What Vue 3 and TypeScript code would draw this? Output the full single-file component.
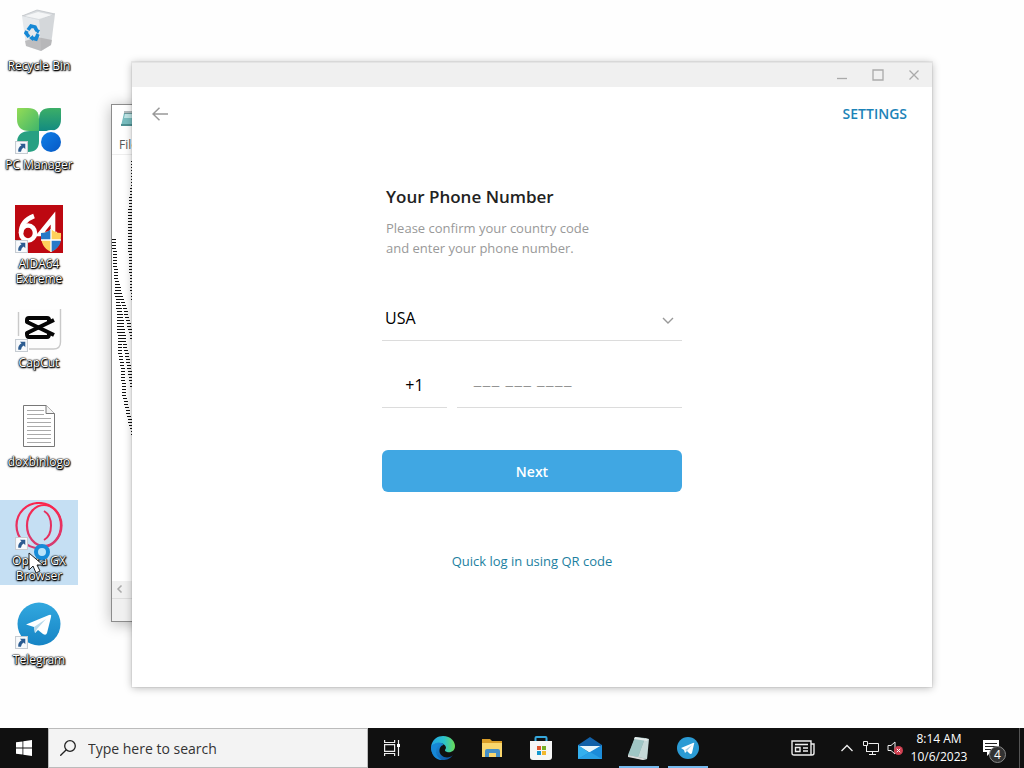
<script setup lang="ts">
import { ref } from 'vue'

type Point = [number, number]

const country = ref('USA')
const code = ref('+1')
const phone = ref('')
const query = ref('')

const shortcuts = [
  { id: 'recycle', label: 'Recycle Bin', linked: false },
  { id: 'pcm', label: 'PC Manager', linked: true },
  { id: 'aida', label: 'AIDA64 Extreme', linked: true },
  { id: 'capcut', label: 'CapCut', linked: true },
  { id: 'doc', label: 'doxbinlogo', linked: false },
  { id: 'opera', label: 'Opera GX Browser', linked: true },
  { id: 'telegram', label: 'Telegram', linked: true },
]

const pinned = [
  { id: 'edge', label: 'Microsoft Edge', open: false },
  { id: 'files', label: 'File Explorer', open: false },
  { id: 'store', label: 'Microsoft Store', open: false },
  { id: 'mail', label: 'Mail', open: false },
  { id: 'notepad', label: 'Notepad', open: true },
  { id: 'tg', label: 'Telegram', open: true },
]

// Strands of the text art in the notepad document, as x/y knots
const strands: Point[][] = [
  [[16, 1], [17, 3]],
  [[19, 6], [19, 26], [17, 46], [16, 60], [16, 84], [17, 110], [19, 146]],
  [[0, 82], [1, 108], [3, 130], [5, 162], [6, 196], [9, 216], [10, 238], [14, 256], [17, 270], [20, 282]],
  [[2, 122], [6, 138], [10, 150], [15, 170], [19, 186]],
  [[2, 136], [7, 160], [10, 184], [14, 206], [19, 234]],
]

function hatch(points: Point[]): string {
  let d = ''
  for (let i = 0; i < points.length - 1; i++) {
    const [x0, y0] = points[i]
    const [x1, y1] = points[i + 1]
    for (let y = Math.ceil(y0 / 3) * 3; y < y1; y += 3) {
      const x = Math.round(x0 + ((x1 - x0) * (y - y0)) / (y1 - y0))
      d += `M${x} ${y}h4v1h-4z`
    }
  }
  return d
}

const art = strands.map(hatch).join('')
</script>

<template>
  <div class="screen">
    <main class="desktop">
      <nav class="shortcuts" aria-label="Desktop">
        <button v-for="s in shortcuts" :key="s.id" type="button" class="shortcut" :class="{ selected: s.id === 'opera' }">
          <span class="picture">
            <svg v-if="s.id === 'recycle'" viewBox="0 0 48 48">
              <path d="M7 9 22 3l18 4-16 7z" fill="#d9dcdf" stroke="#b9bdc1" stroke-width=".7" />
              <path d="M10 9 23 5l14 3-13 4z" fill="#f4f5f6" />
              <path d="m7 9 17 4 2 31-15-5z" fill="#e6e9ec" />
              <path d="m24 13 16-6-4 31-10 6z" fill="#d4d7da" />
              <path d="m10 34 12-4 15 3-1 5-10 6-15-5z" fill="#a7a6a7" opacity=".65" />
              <g fill="none" stroke="#1688d5" stroke-width="3.6">
                <path d="m13 23 3-4 4 1 2 4" /><path d="m23 27-2 5-4-1" /><path d="m14 30-3-4 1-2" />
              </g>
              <path d="m19 22 6 1-2 4zM18 28v6l-4-3z" fill="#1688d5" />
            </svg>
            <svg v-else-if="s.id === 'pcm'" viewBox="0 0 48 48">
              <defs>
                <linearGradient id="leafA" x2="1" y2="1"><stop stop-color="#94dc55" /><stop offset="1" stop-color="#3fb56c" /></linearGradient>
                <linearGradient id="leafB" x2="0" y2="1"><stop stop-color="#3cae67" /><stop offset="1" stop-color="#128b81" /></linearGradient>
                <linearGradient id="ball" x2="1" y2="1"><stop stop-color="#0f80e8" /><stop offset="1" stop-color="#0658c5" /></linearGradient>
              </defs>
              <path d="M24 25h-9Q2 25 2 37v9h11q11 0 11-11z" fill="#27a082" />
              <path d="M3 2h10q11 0 11 11v12H14Q2 25 2 13V3q0-1 1-1z" fill="url(#leafA)" />
              <path d="M45 2H35q-11 0-11 11v12h10q12 0 12-12V3q0-1-1-1z" fill="url(#leafB)" />
              <circle cx="36" cy="36" r="12" fill="#fefefe" />
              <circle cx="36" cy="36" r="10" fill="url(#ball)" />
            </svg>
            <svg v-else-if="s.id === 'aida'" viewBox="0 0 48 48">
              <path d="M0 0h48v48H0z" fill="#bd0811" />
              <g fill="none" stroke="#fff" stroke-width="4.6">
                <path d="M19 11C11 14 6 20 6 28" /><ellipse cx="13" cy="28" rx="7" ry="7.500" />
                <path d="M38 37V13L25 29h17" />
              </g>
              <path d="M26 28q6 0 10-4 4 4 10 4 1 14-10 19-11-5-10-19z" fill="#ffd05a" />
              <path d="M36 24q-4 4-10 4v7h10zM36 35h10q-1 8-10 12z" fill="#2779c8" />
              <path d="M36 24v23M26 35h20" stroke="#fff" stroke-width="1.300" />
            </svg>
            <svg v-else-if="s.id === 'capcut'" viewBox="0 0 48 48">
              <path d="M5 5h37q4 0 4 4v30q0 6-6 6H7q-4 0-4-4V9q0-4 2-4z" fill="#fdfdfd" />
              <path d="M45.500 5v33q0 7-7 7H14M3.500 8v24" fill="none" stroke="#c9c9c9" stroke-width="1.400" />
              <g fill="none" stroke="#050505" stroke-width="4" stroke-linejoin="round">
                <path d="M34 17v-1q0-2-2-2H14q-2 0-2 2v2l27 13" /><path d="M34 29v1q0 3-2 3H14q-2 0-2-3v-1l27-13" />
              </g>
            </svg>
            <svg v-else-if="s.id === 'doc'" viewBox="0 0 48 48">
              <path d="M8.500 2.500H31l8.500 8v33h-31z" fill="#fff" stroke="#777" />
              <path d="M31 2.500v8h8.500" fill="#f4f4f4" stroke="#777" />
              <path d="M12 7.500h17M12 11.500h17M12 15.500h24M12 19.500h24M12 23.500h24M12 27.500h24M12 31.500h24M12 35.500h24M12 39.500h24" stroke="#aaa" />
            </svg>
            <svg v-else-if="s.id === 'opera'" viewBox="0 0 48 48" fill="none">
              <defs><linearGradient id="gx" x2="0" y2="1"><stop stop-color="#fa264e" /><stop offset="1" stop-color="#d43d72" /></linearGradient></defs>
              <circle cx="24" cy="23.500" r="22.500" stroke="url(#gx)" stroke-width="2.200" />
              <ellipse cx="29" cy="23.500" rx="17" ry="20.500" stroke="url(#gx)" stroke-width="2.200" />
              <path d="M29 9q7 4 7 14.500T29 38" stroke="#e52e5e" stroke-width="2" />
            </svg>
            <svg v-else viewBox="0 0 48 48">
              <defs><linearGradient id="plane" x2="0" y2="1"><stop stop-color="#32a8df" /><stop offset="1" stop-color="#1684c5" /></linearGradient></defs>
              <circle cx="24" cy="23" r="21.500" fill="url(#plane)" />
              <path d="M11 23.500 34 14q3-1 2 2l-4 16q-1 3-4 1l-5-4-3 3-1-6z" fill="#fff" />
              <path d="m19 26 12-8-9 10-2 4z" fill="#b9d9ea" />
            </svg>
            <svg v-if="s.linked" class="link-mark" viewBox="0 0 12 12">
              <path d="M.5.5h11v11H.5z" fill="#f8fafc" stroke="#c6ccd2" />
              <path d="M4.500 2.500h5v5L8 6Q6 7 5.500 10H3q-.500-4 3-6z" fill="#2c5c91" />
            </svg>
          </span>
          <span class="caption">{{ s.label }}</span>
          <svg v-if="s.id === 'opera'" class="pointer" viewBox="0 0 26 32">
            <circle cx="14" cy="8" r="6" fill="#b8e3fa" stroke="#168bd8" stroke-width="4" />
            <path d="M1 9v17l4-4 3 7 4-2-3-6h6z" fill="#fff" stroke="#222" />
          </svg>
        </button>
      </nav>

      <section class="notepad" aria-label="Notepad">
        <header class="note-head">
          <svg viewBox="0 0 18 18" class="note-icon">
            <path d="M4 3h13v13H1z" fill="#78bdbf" /><path d="M5 4h12v4H4z" fill="#bfe5e6" /><path d="M1 14h16v2H1z" fill="#4f9193" />
            <path d="M5 1v3M7 1v3M9 1v3M11 1v3M13 1v3M15 1v3" stroke="#64777a" />
          </svg>
        </header>
        <div class="note-menu">File</div>
        <div class="note-body">
          <svg class="art" viewBox="0 0 24 300"><path :d="art" fill="#111" /></svg>
        </div>
        <div class="note-scroll">
          <svg viewBox="0 0 8 8"><path d="M5.500.500 2 4l3.500 3.500" fill="none" stroke="#aaa" stroke-width="1.500" /></svg>
        </div>
        <footer class="note-status"></footer>
      </section>

      <section class="window" aria-label="Telegram">
        <header class="titlebar">
          <button type="button" aria-label="Minimize"><svg viewBox="0 0 12 12"><path d="M1 9.500h10" /></svg></button>
          <button type="button" aria-label="Maximize"><svg viewBox="0 0 12 12"><path d="M1 1h10v10H1z" /></svg></button>
          <button type="button" aria-label="Close"><svg viewBox="0 0 12 12"><path d="m1.500 1.500 9 9m0-9-9 9" /></svg></button>
        </header>
        <div class="toolbar">
          <button type="button" class="back" aria-label="Back">
            <svg viewBox="0 0 16 14"><path d="M7.500.700 1 7l6.500 6.300M1 7h15" /></svg>
          </button>
          <button type="button" class="settings">SETTINGS</button>
        </div>
        <form class="login" @submit.prevent>
          <h1>Your Phone Number</h1>
          <p>Please confirm your country code<br />and enter your phone number.</p>
          <div class="country">
            <select v-model="country" aria-label="Country"><option>USA</option></select>
            <svg viewBox="0 0 12 8"><path d="m1 1 5 5 5-5" /></svg>
          </div>
          <div class="number">
            <input v-model="code" class="code" type="text" aria-label="Country code" />
            <input v-model="phone" class="phone" type="tel" aria-label="Phone number" placeholder="––– ––– ––––" />
          </div>
          <button type="submit" class="next">Next</button>
          <a href="#" class="qr">Quick log in using QR code</a>
        </form>
      </section>
    </main>

    <footer class="taskbar">
      <button type="button" class="start" aria-label="Start">
        <svg viewBox="0 0 16 16" fill="#fff"><path d="M0 2.300 6.500 1.400v6.200H0zM7.300 1.300 16 0v7.600H7.300zM0 8.400h6.500v6.200L0 13.700zM7.300 8.400H16V16l-8.700-1.300z" /></svg>
      </button>
      <label class="search">
        <svg viewBox="0 0 16 16" fill="none" stroke="#222" stroke-width="1.300"><circle cx="10" cy="6" r="5.300" /><path d="m6.300 9.700-6 6" /></svg>
        <input v-model="query" type="text" aria-label="Search" placeholder="Type here to search" />
      </label>
      <button type="button" class="task-view" aria-label="Task view">
        <svg viewBox="0 0 16 16" fill="none" stroke="#eee" stroke-width="1.200"><path d="M.600 0v2.500h10V0M.600 16v-2.500h10V16M.600 4.600h10v6.800H.600zM14.500 0v16" /><path d="M13 4h3v3h-3z" fill="#fff" stroke="none" /></svg>
      </button>
      <button v-for="p in pinned" :key="p.id" type="button" class="app" :class="{ open: p.open }" :aria-label="p.label">
        <svg v-if="p.id === 'edge'" viewBox="0 0 26 26">
          <defs>
            <linearGradient id="e1" x2="1"><stop stop-color="#22a5e5" /><stop offset=".55" stop-color="#2bc2cb" /><stop offset="1" stop-color="#6add55" /></linearGradient>
            <linearGradient id="e2" x2="1" y2="1"><stop stop-color="#1c96e0" /><stop offset="1" stop-color="#0c4e9e" /></linearGradient>
          </defs>
          <path d="M1 12C2 4 8 1 13 1c8 0 12 6 12 10 0 5-4 7-8 6-3-1-2-2-1-4 0-5-9-8-15-1z" fill="url(#e1)" />
          <path d="M1 12c3-5 10-6 13-2-5 0-7 9 0 12 4 1 7 0 9-2-3 4-6 5-10 5C6 25 1 19 1 12z" fill="url(#e2)" />
          <path d="M9 10c-4 3-5 11 3 15-7 0-11-6-11-13 2-3 5-4 8-2z" fill="#1688d7" />
        </svg>
        <svg v-else-if="p.id === 'files'" viewBox="0 0 26 26">
          <path d="M3 4h8l2 2h10v5H3z" fill="#d99d28" /><path d="M3 8h20v14H3z" fill="#f9d66d" />
          <path d="M6 22v-6q0-2 2-2h11q2 0 2 2v6h-4v-4h-7v4z" fill="#458fc6" />
        </svg>
        <svg v-else-if="p.id === 'store'" viewBox="0 0 26 26">
          <path d="M7.500 6V3q0-1 1-1h9q1 0 1 1v3" fill="none" stroke="#36a8dc" stroke-width="2" />
          <path d="M2 6h22v16q0 3-3 3H5q-3 0-3-3z" fill="#f6f6f6" />
          <path d="M9 11h4v4H9z" fill="#df562e" /><path d="M14 11h4v4h-4z" fill="#76af24" /><path d="M9 16h4v4H9z" fill="#1698cf" /><path d="M14 16h4v4h-4z" fill="#f2b82e" />
        </svg>
        <svg v-else-if="p.id === 'mail'" viewBox="0 0 26 26">
          <path d="M1 10 13 2l12 8v5H1z" fill="#1261a9" /><path d="M2 11h22L13 18z" fill="#e9f6fd" /><path d="m1 10 12 8v6H1z" fill="#34b0ee" /><path d="m25 10-12 7L1 24h24z" fill="#1c8cd9" /><path d="m13 17 12 7H1z" fill="#2aa1e5" />
        </svg>
        <svg v-else-if="p.id === 'notepad'" viewBox="0 0 26 26">
          <path d="m9 3 13 1-1 20-4 1-15-4z" fill="#6f9594" /><path d="m9 2 10 1-7 19-10-2z" fill="#9fc6c5" /><path d="m19 3 4 1-2 20-9-2z" fill="#c6d9d8" /><path d="m9 2 13 2-1 2-13-2z" fill="#e4ebea" /><path d="m2 20 10 2 9 2-4 1-15-3z" fill="#dadada" />
        </svg>
        <svg v-else viewBox="0 0 26 26">
          <circle cx="13" cy="13" r="11" fill="#2b9bd4" /><path d="m6 13 12-5q2-1 1 1l-2 9q-1 2-3 0l-2-2-2 2-1-3z" fill="#fff" /><path d="m10 15 7-5-5 6z" fill="#a9d2e8" />
        </svg>
      </button>
      <div class="tray">
        <button type="button" class="news" aria-label="News">
          <svg viewBox="0 0 24 16" fill="none" stroke="#eee" stroke-width="1.400"><path d="M1 1h19v14H3q-2 0-2-2zM20 4h3v9q0 2-2 2h-3M4 4.500h13M12 8h5M12 11h5" /><path d="M4.500 7.500H9v4H4.500z" /></svg>
        </button>
        <button type="button" class="more" aria-label="Hidden icons"><svg viewBox="0 0 12 8" fill="none" stroke="#eee" stroke-width="1.300"><path d="m.500 7 5.500-5.500L11.500 7" /></svg></button>
        <button type="button" class="network" aria-label="Network"><svg viewBox="0 0 16 14" fill="none" stroke="#eee"><path d="M5.500 2.500h10v8H3.500v-5M9.500 10.500v3M6 13.500h7M.500.500h4v4h-4zM3.500 5v6" /></svg></button>
        <button type="button" class="sound" aria-label="Muted"><svg viewBox="0 0 16 14"><path d="M1 4.500h3L8 1v12L4 9.500H1z" fill="none" stroke="#eee" /><circle cx="11.500" cy="9.500" r="4.500" fill="#cf3f50" /><path d="m9.800 7.800 3.400 3.400m0-3.400-3.400 3.400" stroke="#fff" /></svg></button>
        <time class="clock"><span>8:14 AM</span><span>10/6/2023</span></time>
        <button type="button" class="notices" aria-label="Notifications">
          <svg viewBox="0 0 18 16"><path d="M1 0h16v12H9l-4 4v-4H1z" fill="#fff" /><path d="M3 3.500h12M3 6.500h12M3 9.500h8" stroke="#222" /></svg>
          <span class="count">4</span>
        </button>
        <span class="peek"></span>
      </div>
    </footer>
  </div>
</template>

<style>
body { margin: 0; overflow: hidden; }
</style>

<style scoped>
.screen { height: 100vh; display: flex; flex-direction: column; background: #fefefe; font-family: "Open Sans", "Noto Sans", sans-serif; color: #000; }
.screen *, .screen *::before { box-sizing: border-box; }
svg { display: block; flex: none; }
button { border: 0; padding: 0; background: none; font: inherit; color: inherit; }
input, select { border: 0; padding: 0; background: none; font: inherit; color: inherit; outline: 0; min-width: 0; border-radius: 0; }

.desktop { flex: 1; position: relative; min-height: 0; }
.shortcuts { display: grid; grid-auto-rows: 99px; width: 78px; padding-top: 5px; }
.shortcut { position: relative; display: flex; flex-direction: column; align-items: center; height: 85px; padding-top: 2px; }
.selected { background: #c5dff3; }
.picture { position: relative; width: 48px; height: 48px; margin-bottom: 3px; }
.link-mark { position: absolute; left: 0; bottom: 0; width: 13px; height: 13px; }
.caption { max-width: 72px; font-size: 12px; line-height: 15px; color: #fff; text-align: center; text-shadow: 0 0 1px #000, 0 0 1px #000, 0 0 2px #000, 1px 1px 1px #000, 0 1px 2px #000; }
.pointer { position: absolute; left: 28px; top: 44px; width: 26px; height: 32px; }

.notepad { position: absolute; left: 111px; top: 104px; width: 120px; height: 518px; display: flex; flex-direction: column; border: 1px solid #8c8c8c; background: #fff; box-shadow: 0 2px 14px rgba(0, 0, 0, .28); }
.note-head { height: 30px; padding: 5px 8px; }
.note-icon { width: 18px; height: 18px; }
.note-menu { height: 20px; padding-left: 7px; border-bottom: 1px solid #eee; font-size: 12px; line-height: 19px; color: #555; }
.note-body { flex: 1; }
.art { width: 24px; height: 300px; }
.note-scroll { height: 17px; padding: 4px; background: #f0f0f0; }
.note-scroll svg { width: 8px; height: 8px; }
.note-status { height: 23px; border-top: 1px solid #ddd; background: #f0f0f0; }

.window { position: absolute; left: 132px; right: 92px; top: 62px; min-height: 625px; background: #fff; box-shadow: 0 0 0 1px rgba(0, 0, 0, .05), 0 1px 8px rgba(0, 0, 0, .28); }
.titlebar { display: flex; justify-content: flex-end; height: 25px; background: #f0f0f0; border-top: 1px solid #e4e4e4; }
.titlebar button { width: 36px; display: grid; place-items: center; }
.titlebar svg { width: 12px; height: 12px; fill: none; stroke: #aaa; stroke-width: 1.3; }
.toolbar { display: flex; justify-content: space-between; align-items: center; height: 54px; padding: 0 25px 0 20px; }
.back svg { width: 16px; height: 14px; fill: none; stroke: #999; stroke-width: 1.5; }
.settings { font-size: 14px; line-height: 20px; font-weight: 600; color: #1c83b8; }
.login { display: flex; flex-direction: column; width: 300px; margin: 0 auto; padding-top: 44px; }
h1 { margin: 0 4px; font-size: 17px; line-height: 24px; font-weight: 600; color: #222; }
p { margin: 9px 4px 0; font-size: 13px; line-height: 20px; color: #999; }
.country { position: relative; margin-top: 37px; border-bottom: 1px solid #dcdcdc; }
.country select { display: block; width: 100%; height: 45px; padding-left: 3px; appearance: none; font-size: 16px; }
.country svg { position: absolute; right: 8px; top: 22px; width: 12px; height: 8px; fill: none; stroke: #999; stroke-width: 1.4; pointer-events: none; }
.number { display: flex; gap: 10px; margin-top: 22px; }
.number input { height: 45px; border-bottom: 1px solid #dcdcdc; font-size: 16px; }
.code { width: 65px; text-align: center; }
.phone { flex: 1; padding-left: 16px; }
.number .phone { font-size: 18px; }
.phone::placeholder { color: #888; opacity: 1; font-weight: 300; }
.next { height: 42px; margin-top: 42px; border-radius: 6px; background: #40a7e3; color: #fff; font-size: 14px; font-weight: 600; }
.qr { align-self: center; margin-top: 59px; font-size: 13px; line-height: 20px; color: #1c7f9f; text-decoration: none; }

.taskbar { display: flex; height: 40px; background: #101010; color: #fff; }
.taskbar button { display: grid; place-items: center; }
.start { width: 48px; }
.start svg { width: 16px; height: 16px; }
.search { display: flex; align-items: center; gap: 12px; width: 320px; padding: 0 12px 0 11px; border: 1px solid #bbb; background: #f3f3f3; color: #333; }
.search svg { width: 16px; height: 16px; }
.search input { flex: 1; font-size: 14px; }
.search input::placeholder { color: #333; opacity: 1; }
.task-view { width: 48px; margin-right: 2px; }
.task-view svg { width: 16px; height: 16px; }
.app { position: relative; width: 49px; }
.app > svg { width: 26px; height: 26px; }
.open::after { content: ""; position: absolute; left: 5px; right: 4px; bottom: 0; height: 2px; background: #76b9ed; }
.tray { display: flex; align-items: center; margin-left: auto; }
.tray button { height: 40px; }
.news { width: 40px; margin-right: 12px; }
.news svg { width: 24px; height: 16px; }
.more, .network, .sound { width: 24px; }
.more svg { width: 12px; height: 8px; }
.network svg, .sound svg { width: 16px; height: 14px; }
.clock { width: 64px; display: grid; font-size: 12px; line-height: 18px; text-align: center; }
.notices { position: relative; width: 40px; margin-right: 8px; }
.notices svg { width: 18px; height: 16px; }
.count { position: absolute; left: 18px; top: 18px; width: 17px; height: 17px; border: 1px solid #888; border-radius: 50%; background: #333; font-size: 12px; line-height: 15px; text-align: center; }
.peek { width: 5px; height: 40px; border-left: 1px solid #555; }
</style>
